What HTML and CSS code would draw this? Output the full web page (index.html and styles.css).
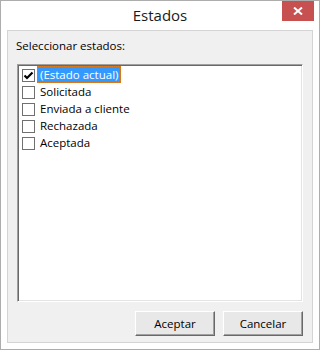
FILE: index.html
```html
<!DOCTYPE html>
<html lang="es">
<head>
  <meta charset="UTF-8" />
  <title>Estados</title>
  <link rel="stylesheet" href="styles.css">
</head>
<body>
<div class="window">
  <div class="titlebar">
    <span class="title">Estados</span>
    <div class="close">
      <svg width="10" height="8" viewBox="0 0 10 8">
        <path d="M1 0.5 L9 7.5 M9 0.5 L1 7.5" stroke="#fff" stroke-width="2" fill="none"/>
      </svg>
    </div>
  </div>
  <div class="client">
    <div class="label">Seleccionar estados:</div>
    <div class="listbox">
      <div class="row">
        <span class="check">
          <svg width="11" height="11" viewBox="0 0 11 11">
            <path d="M1.5 5.5 L4 8 L9.5 2.5" stroke="#000" stroke-width="2.2" fill="none"/>
          </svg>
        </span>
        <span class="text selected">(Estado actual)</span>
      </div>
      <div class="row"><span class="check"></span><span class="text">Solicitada</span></div>
      <div class="row"><span class="check"></span><span class="text">Enviada a cliente</span></div>
      <div class="row"><span class="check"></span><span class="text">Rechazada</span></div>
      <div class="row"><span class="check"></span><span class="text">Aceptada</span></div>
    </div>
    <div class="buttons">
      <button class="btn">Aceptar</button>
      <button class="btn">Cancelar</button>
    </div>
  </div>
</div>
</body>
</html>
```

FILE: styles.css
```css
* { margin: 0; padding: 0; box-sizing: border-box; }
body {
  background: #fff;
  font-family: "Open Sans", "Noto Sans", sans-serif;
  font-size: 11.5px;
  color: #000;
}
.window {
  width: 320px;
  height: 350px;
  border: 1px solid #adadad;
  background: #fff;
  display: flex;
  flex-direction: column;
}
.titlebar {
  height: 29px;
  display: flex;
  justify-content: center;
  align-items: center;
  position: relative;
}
.title { font-size: 15px; color: #1a1a1a; margin-top: -1px; }
.close {
  position: absolute;
  top: 0;
  right: 5px;
  width: 32px;
  height: 20px;
  background: #c75050;
  display: flex;
  justify-content: center;
  align-items: center;
}
.client {
  flex: 1;
  margin: 0 6px 6px 6px;
  border: 1px solid #d4d4d4;
  background: #f0f0f0;
  padding: 6px 9px 6px 9px;
  display: flex;
  flex-direction: column;
}
.label { height: 17px; line-height: 17px; margin-left: -1px; }
.listbox {
  margin-top: 10px;
  height: 238px;
  background: #fff;
  border: 1px solid;
  border-color: #a0a0a0 #fff #fff #a0a0a0;
  box-shadow: inset 1px 1px 0 #696969, inset -1px -1px 0 #e3e3e3;
  padding: 1px 0 0 4px;
}
.row {
  height: 17px;
  display: flex;
  align-items: center;
}
.check {
  width: 13px;
  height: 13px;
  border: 1px solid #707070;
  background: #fff;
  display: flex;
  justify-content: center;
  align-items: center;
  margin-top: 1px;
}
.text {
  margin-left: 2px;
  padding: 0 2px;
  height: 17px;
  line-height: 16px;
  border: 1px dotted transparent;
}
.text.selected {
  background: #3399ff;
  color: #fff;
  border-color: #e07b1a;
}
.buttons {
  display: flex;
  justify-content: flex-end;
  gap: 8px;
  margin-top: 9px;
}
.btn {
  width: 80px;
  height: 25px;
  font-family: "Open Sans", "Noto Sans", sans-serif;
  font-size: 11.5px;
  color: #000;
  background: #e8e8e8;
  border: 1px solid;
  border-color: #fff #696969 #696969 #fff;
  box-shadow: inset -1px -1px 0 #a0a0a0;
}
```
